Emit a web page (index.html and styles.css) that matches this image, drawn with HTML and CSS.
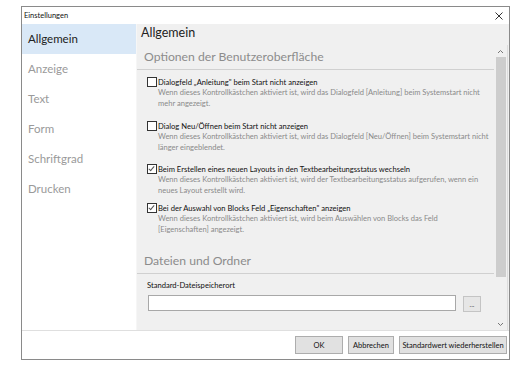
FILE: index.html
```html
<!DOCTYPE html>
<html lang="de">
<head>
  <meta charset="UTF-8">
  <title>Einstellungen</title>
  <link rel="stylesheet" href="styles.css">
</head>
<body>
  <div class="window">
    <!-- Titelleiste -->
    <div class="titlebar">
      <span class="title">Einstellungen</span>
      <svg class="close" width="8" height="8" viewBox="0 0 8 8">
        <path d="M0.5 0.5 L7.5 7.5 M7.5 0.5 L0.5 7.5" stroke="#333" stroke-width="1" fill="none"/>
      </svg>
    </div>

    <div class="main">
      <!-- Navigation -->
      <ul class="sidebar">
        <li class="active">Allgemein</li>
        <li>Anzeige</li>
        <li>Text</li>
        <li>Form</li>
        <li>Schriftgrad</li>
        <li>Drucken</li>
      </ul>

      <!-- Inhalt -->
      <div class="content">
        <h1>Allgemein</h1>
        <div class="pane">
          <div class="pane-inner">
            <h2>Optionen der Benutzeroberfläche</h2>

            <div class="option">
              <label><span class="check"></span>Dialogfeld „Anleitung" beim Start nicht anzeigen</label>
              <p>Wenn dieses Kontrollkästchen aktiviert ist, wird das Dialogfeld [Anleitung] beim Systemstart nicht mehr angezeigt.</p>
            </div>

            <div class="option">
              <label><span class="check"></span>Dialog Neu/Öffnen beim Start nicht anzeigen</label>
              <p>Wenn dieses Kontrollkästchen aktiviert ist, wird das Dialogfeld [Neu/Öffnen] beim Systemstart nicht länger eingeblendet.</p>
            </div>

            <div class="option">
              <label><span class="check on"></span>Beim Erstellen eines neuen Layouts in den Textbearbeitungsstatus wechseln</label>
              <p>Wenn dieses Kontrollkästchen aktiviert ist, wird der Textbearbeitungsstatus aufgerufen, wenn ein neues Layout erstellt wird.</p>
            </div>

            <div class="option">
              <label><span class="check on"></span>Bei der Auswahl von Blocks Feld „Eigenschaften" anzeigen</label>
              <p>Wenn dieses Kontrollkästchen aktiviert ist, wird beim Auswählen von Blocks das Feld<br>[Eigenschaften] angezeigt.</p>
            </div>

            <h2 class="second">Dateien und Ordner</h2>

            <div class="field">
              <div class="field-label">Standard-Dateispeicherort</div>
              <div class="field-row">
                <input type="text">
                <button type="button" class="browse">...</button>
              </div>
            </div>
          </div>

          <div class="scrollbar">
            <svg class="arrow" width="7" height="5" viewBox="0 0 7 5">
              <path d="M1 4 L3.5 1.5 L6 4" stroke="#777" stroke-width="1" fill="none"/>
            </svg>
            <div class="thumb"></div>
            <svg class="arrow" width="7" height="5" viewBox="0 0 7 5">
              <path d="M1 1 L3.5 3.5 L6 1" stroke="#777" stroke-width="1" fill="none"/>
            </svg>
          </div>
        </div>
      </div>
    </div>

    <!-- Schaltflächen -->
    <div class="footer">
      <button type="button" class="btn ok">OK</button>
      <button type="button" class="btn cancel">Abbrechen</button>
      <button type="button" class="btn reset">Standardwert wiederherstellen</button>
    </div>
  </div>
</body>
</html>
```

FILE: styles.css
```css
body {
  margin: 0;
  background: #fff;
  font-family: Lato, "Noto Sans", sans-serif;
  color: #222;
}

/* Fenster */
.window {
  margin: 6px 0 0 21px;
  width: 487px;
  height: 352px;
  border: 1px solid #8a8a8a;
  display: flex;
  flex-direction: column;
  background: #fff;
}

.titlebar {
  height: 17px;
  display: flex;
  justify-content: space-between;
  align-items: center;
  padding: 0 6px 0 2px;
  flex-shrink: 0;
}

.title {
  font-size: 7.5px;
  color: #111;
}

.main {
  flex: 1;
  display: flex;
  min-height: 0;
}

/* Navigation */
.sidebar {
  list-style: none;
  margin: 0;
  padding: 0;
  width: 114px;
  background: #fff;
  border-right: 1px solid #f6f6f6;
  flex-shrink: 0;
}

.sidebar li {
  height: 30px;
  line-height: 30px;
  padding-left: 6px;
  font-size: 11.5px;
  color: #9a9a9a;
}

.sidebar li.active {
  background: #d9e8f7;
  color: #222;
}

/* Inhalt */
.content {
  flex: 1;
  background: #f0f0f0;
  display: flex;
  flex-direction: column;
  min-width: 0;
}

h1 {
  margin: 0;
  padding: 1px 0 0 4px;
  height: 20px;
  font-size: 12.5px;
  font-weight: normal;
  color: #222;
}

.pane {
  flex: 1;
  display: flex;
  min-height: 0;
  border-right: 1px solid #dcdcdc;
  margin-right: 1px;
}

.pane-inner {
  flex: 1;
  min-width: 0;
  overflow: hidden;
}

h2 {
  margin: 0;
  padding: 4px 0 0 7px;
  height: 20px;
  border-bottom: 1px solid #d0d0d0;
  font-size: 12.2px;
  font-weight: normal;
  color: #8c8c8c;
}

h2.second {
  margin-top: 14px;
}

.option {
  padding: 6px 0 0 10px;
}

.option:nth-of-type(2) {
  margin-top: 5px;
}

.option:nth-of-type(3) {
  margin-top: 4px;
}

.option label {
  display: flex;
  align-items: center;
  font-size: 7.6px;
  color: #111;
  height: 11px;
}

.check {
  width: 8px;
  height: 8px;
  border: 1px solid #333;
  background: #fff;
  margin-right: 1px;
  position: relative;
  flex-shrink: 0;
}

.check.on::after {
  content: "";
  position: absolute;
  left: 2px;
  top: 0;
  width: 2px;
  height: 5px;
  border: solid #555;
  border-width: 0 1px 1px 0;
  transform: rotate(40deg);
}

.option p {
  margin: 0 0 0 11px;
  font-size: 7.55px;
  line-height: 11px;
  color: #8a8a8a;
}

.field {
  padding: 6px 0 0 11px;
}

.field-label {
  font-size: 7.6px;
  color: #111;
  height: 11px;
  line-height: 11px;
  margin-left: -1px;
}

.field-row {
  display: flex;
  align-items: flex-start;
  margin-top: 4px;
}

.field-row input {
  width: 308px;
  height: 16px;
  box-sizing: border-box;
  border: 1px solid #a8a8a8;
  background: #fff;
  padding: 0;
  margin: 0;
}

.browse {
  margin: 1px 0 0 7px;
  width: 18px;
  height: 16px;
  padding: 0;
  border: 1px solid #c4c4c4;
  background: #e6e6e6;
  font-size: 7px;
  color: #555;
  font-family: inherit;
}

/* Scrollleiste */
.scrollbar {
  width: 13px;
  display: flex;
  flex-direction: column;
  align-items: center;
  flex-shrink: 0;
}

.arrow {
  margin: 4px 0 3px;
}

.thumb {
  width: 10px;
  height: 220px;
  background: #cdcdcd;
  margin-bottom: auto;
}

/* Schaltflächen */
.footer {
  height: 28px;
  border-top: 1px solid #dfdfdf;
  display: flex;
  justify-content: flex-end;
  align-items: center;
  gap: 5px;
  padding-right: 2px;
  flex-shrink: 0;
}

.btn {
  height: 18px;
  padding: 0;
  border: 1px solid #adadad;
  background: #e1e1e1;
  font-family: inherit;
  font-size: 7.5px;
  color: #111;
}

.btn.ok {
  width: 48px;
}

.btn.cancel {
  width: 46px;
}

.btn.reset {
  width: 108px;
}
```
